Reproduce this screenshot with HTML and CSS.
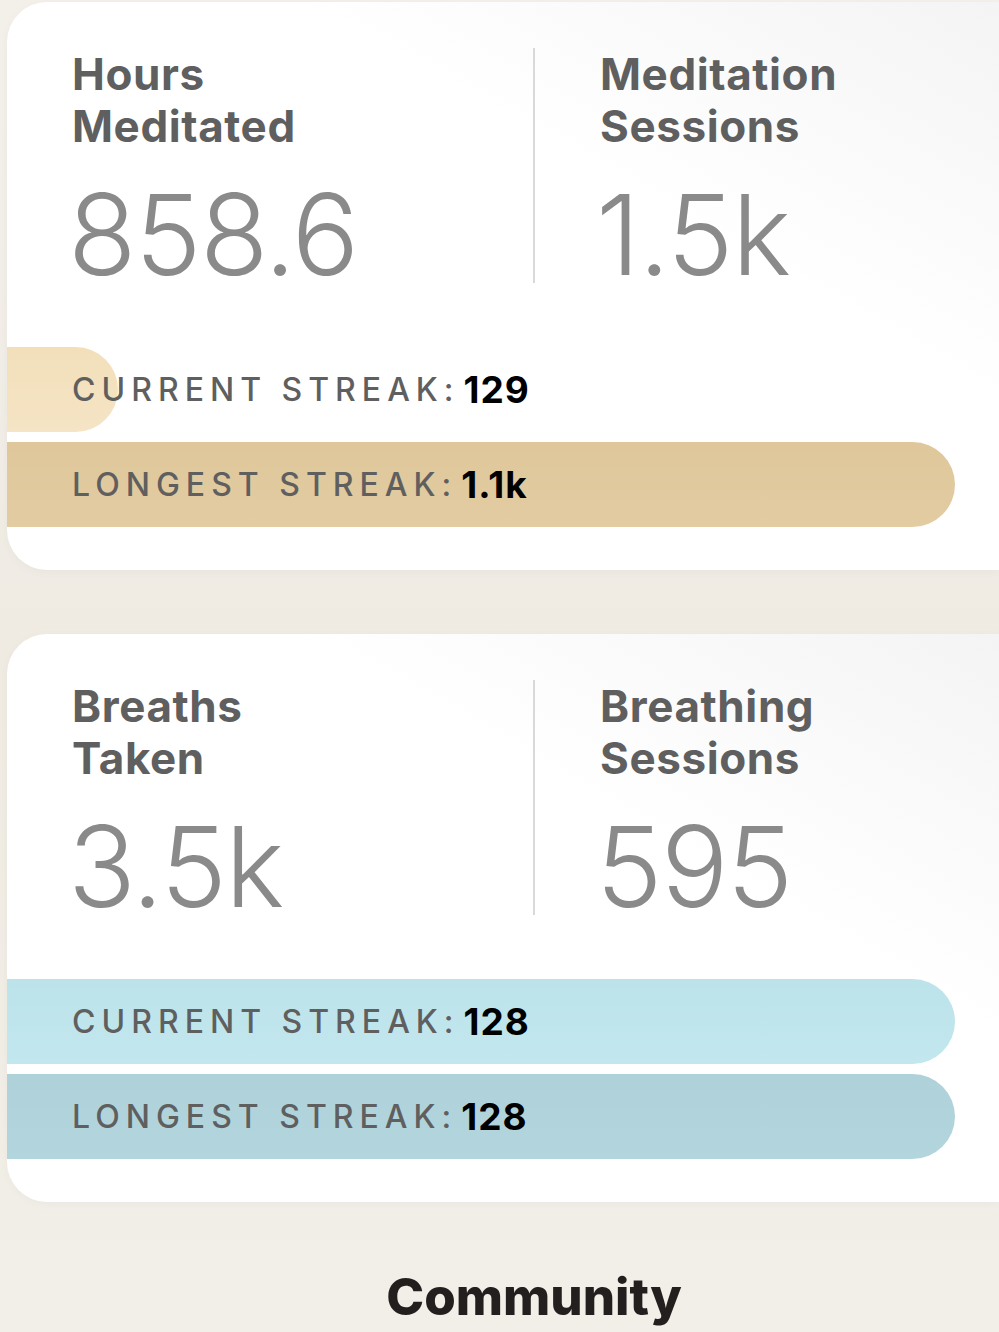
FILE: index.html
```html
<!DOCTYPE html>
<html lang="en">
<head>
    <meta charset="UTF-8">
    <meta name="viewport" content="width=device-width, initial-scale=1.0">
    <title>Profile Stats</title>
    <link rel="stylesheet" href="styles.css">
</head>
<body>
    <div class="page">
        <!-- Meditation Card -->
        <div class="stat-card">
            <div class="stat-row">
                <div class="stat-col">
                    <div class="stat-title">Hours<br>Meditated</div>
                    <div class="stat-value">858.6</div>
                </div>
                <div class="stat-col right">
                    <div class="stat-title">Meditation<br>Sessions</div>
                    <div class="stat-value">1.5k</div>
                </div>
            </div>
            <div class="streaks">
                <div class="streak">
                    <div class="streak-fill med-current" style="width: 111px"></div>
                    <span class="streak-label">CURRENT STREAK:</span><span class="streak-num">129</span>
                </div>
                <div class="streak">
                    <div class="streak-fill med-longest" style="width: 948px"></div>
                    <span class="streak-label">LONGEST STREAK:</span><span class="streak-num">1.1k</span>
                </div>
            </div>
        </div>

        <!-- Breathing Card -->
        <div class="stat-card">
            <div class="stat-row">
                <div class="stat-col">
                    <div class="stat-title">Breaths<br>Taken</div>
                    <div class="stat-value">3.5k</div>
                </div>
                <div class="stat-col right">
                    <div class="stat-title">Breathing<br>Sessions</div>
                    <div class="stat-value">595</div>
                </div>
            </div>
            <div class="streaks">
                <div class="streak">
                    <div class="streak-fill br-current" style="width: 948px"></div>
                    <span class="streak-label">CURRENT STREAK:</span><span class="streak-num">128</span>
                </div>
                <div class="streak">
                    <div class="streak-fill br-longest" style="width: 948px"></div>
                    <span class="streak-label">LONGEST STREAK:</span><span class="streak-num">128</span>
                </div>
            </div>
        </div>

        <h2 class="section-title">Community</h2>
    </div>
</body>
</html>
```

FILE: styles.css
```css
* {
    margin: 0;
    padding: 0;
    box-sizing: border-box;
    font-family: Inter, "Noto Sans", sans-serif;
}

body {
    background: linear-gradient(to bottom, #f3f0ea, #efebe3 50%, #f2efe8);
    min-height: 1332px;
    overflow: hidden;
}

.page {
    padding: 2px 0 0 7px;
}

.stat-card {
    background: linear-gradient(to bottom left, #f4f4f4, #ffffff 35%);
    border-radius: 40px 0 0 40px;
    padding: 46px 0 43px 0;
    margin-bottom: 64px;
    box-shadow: 0 2px 10px rgba(0,0,0,0.03);
}

.stat-row {
    display: flex;
}

.stat-col {
    width: 528px;
    padding-left: 65px;
    border-right: 2px solid #d9d9d9;
    height: 235px;
}

.stat-col.right {
    border-right: none;
    padding-left: 65px;
    width: auto;
}

.stat-title {
    font-size: 44px;
    font-weight: 700;
    line-height: 52px;
    letter-spacing: 0.6px;
    color: #5f5f5f;
}

.stat-value {
    font-size: 112px;
    font-weight: 300;
    line-height: 120px;
    letter-spacing: -1.5px;
    color: #8a8a8a;
    margin-top: 22px;
    margin-left: -4px;
}

.streaks {
    margin-top: 64px;
    display: flex;
    flex-direction: column;
    gap: 10px;
}

.streak {
    position: relative;
    height: 85px;
    display: flex;
    align-items: center;
    padding-left: 65px;
}

.streak-fill {
    position: absolute;
    left: 0;
    top: 0;
    bottom: 0;
    border-radius: 0 43px 43px 0;
}

.med-current {
    background: linear-gradient(to top, #f5e4c5, #f2dfba);
}

.med-longest {
    background: linear-gradient(to top, #e3cca2, #dfc79b);
}

.br-current {
    background: linear-gradient(to top, #c2e7ee, #bde3ea);
}

.br-longest {
    background: linear-gradient(to top, #b3d6de, #afd2da);
}

.streak-label {
    position: relative;
    font-size: 32px;
    font-weight: 500;
    letter-spacing: 6px;
    color: #5f5f5f;
}

.streak-num {
    position: relative;
    font-size: 37px;
    font-weight: 700;
    letter-spacing: 1px;
    color: #000;
    margin-left: 4px;
}

.section-title {
    text-align: center;
    padding-left: 62px;
    margin-top: 50px;
    font-size: 51px;
    font-weight: 800;
    color: #231f1f;
}
```
